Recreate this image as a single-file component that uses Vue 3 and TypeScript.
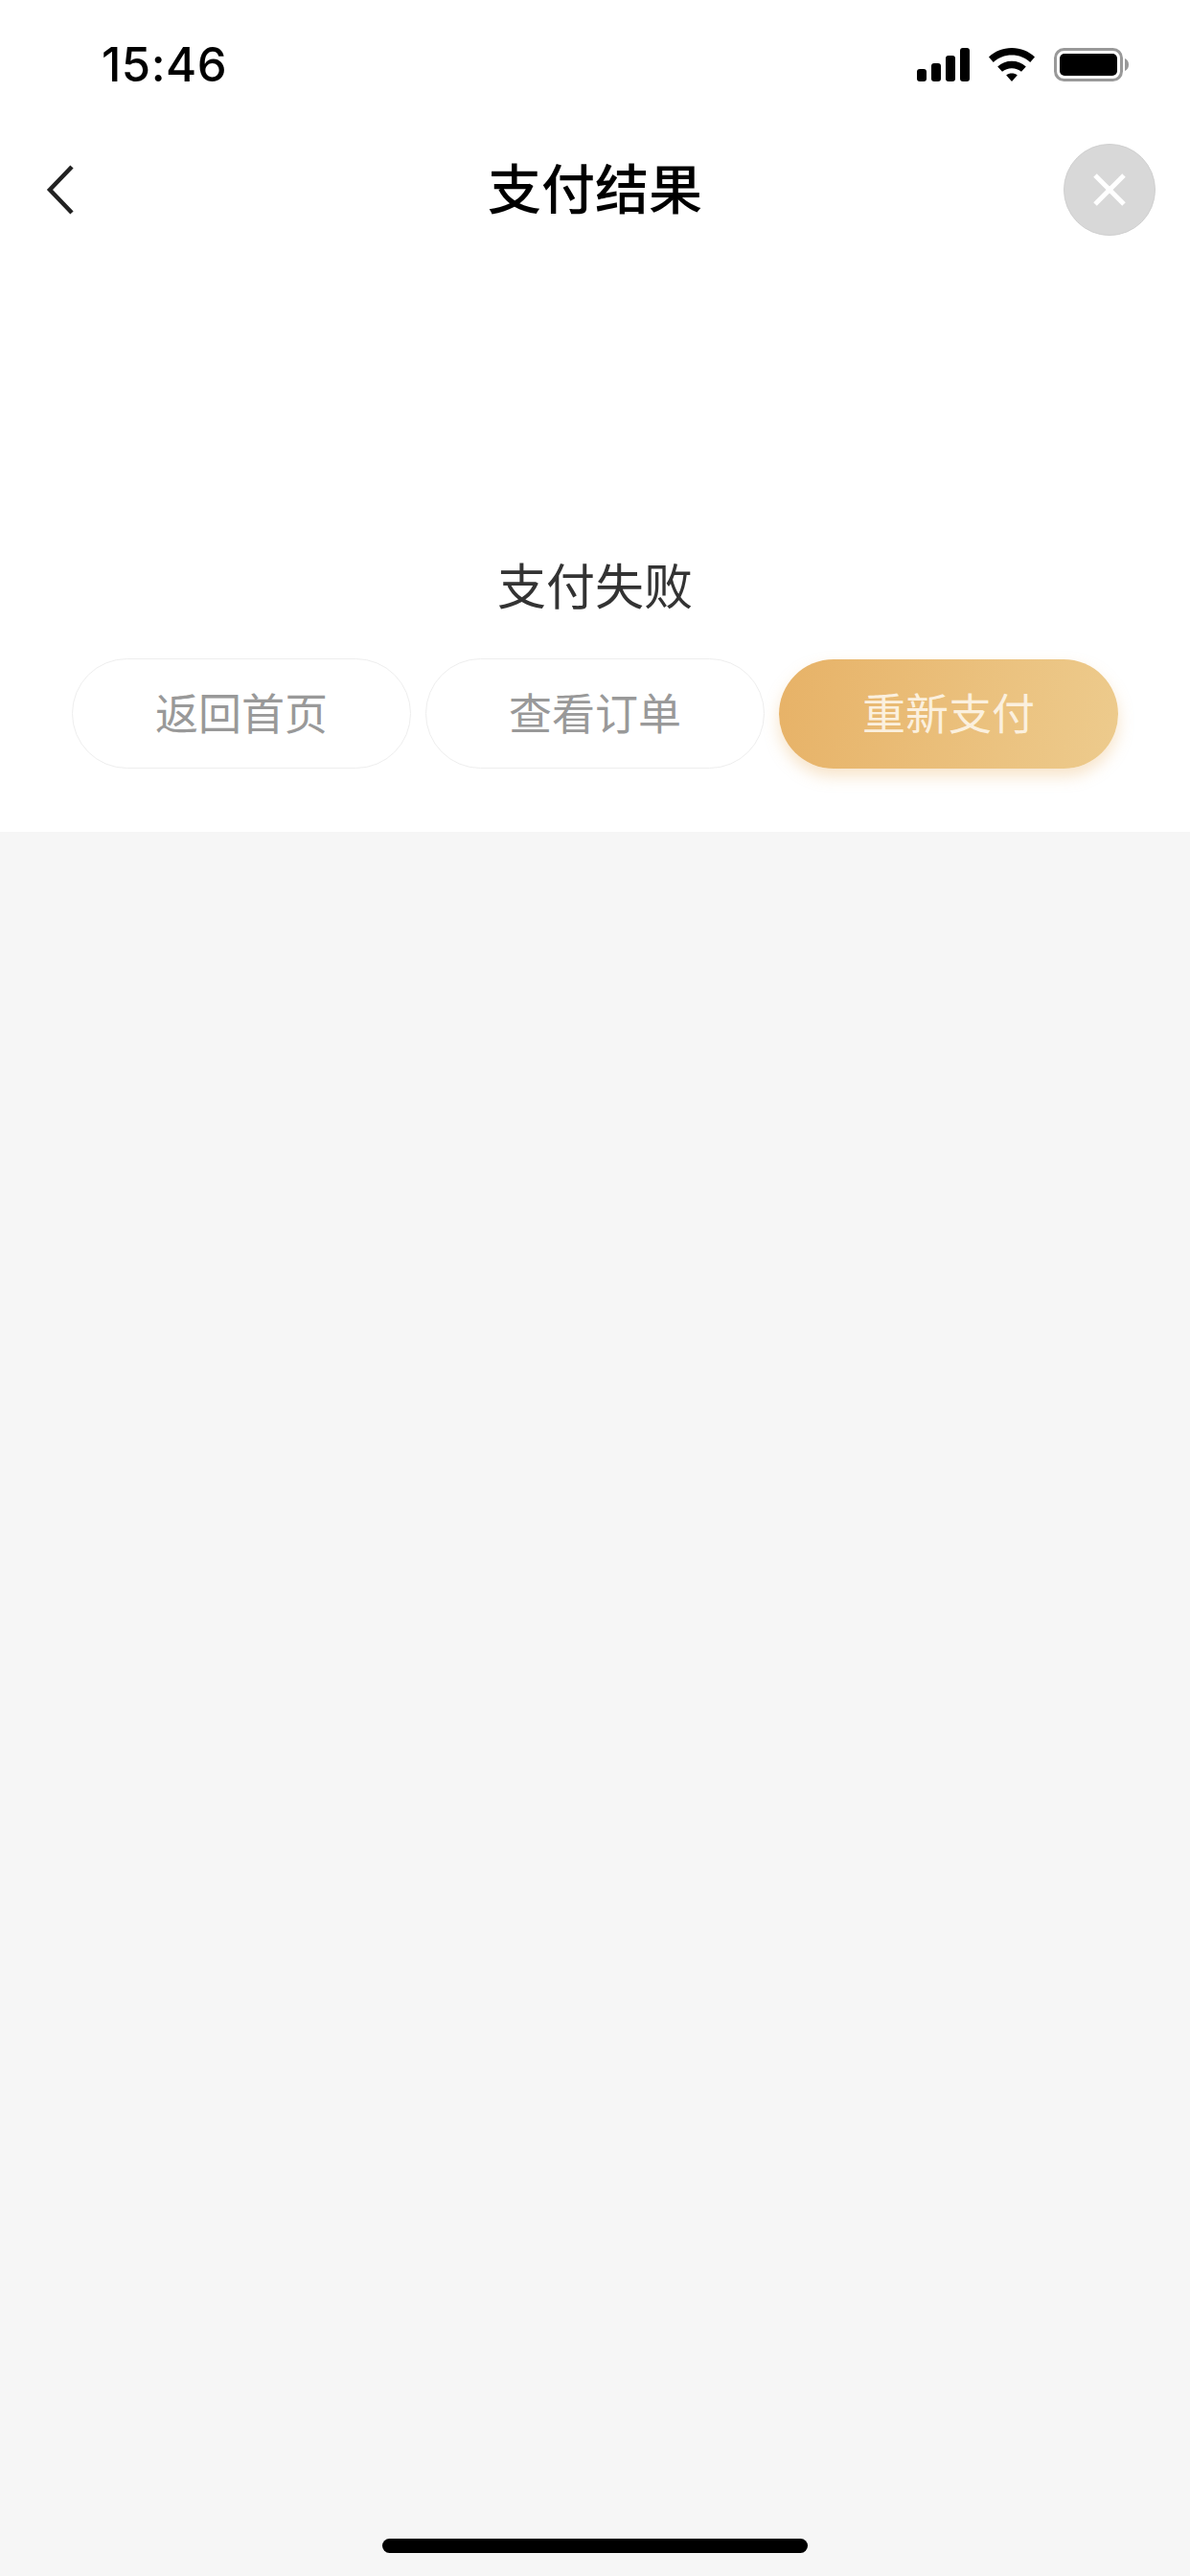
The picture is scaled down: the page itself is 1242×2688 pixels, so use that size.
<!-- 支付结果页 -->
<template>
  <div class="page">
    <section class="top">
      <header class="status-bar">
        <span class="time">15:46</span>
        <div class="status-icons">
          <svg width="55" height="35" viewBox="0 0 55 35">
            <rect x="0" y="22" width="10" height="13" rx="3" />
            <rect x="15" y="16" width="10" height="19" rx="3" />
            <rect x="30" y="8" width="10" height="27" rx="3" />
            <rect x="45" y="0" width="10" height="35" rx="3" />
          </svg>
          <svg width="48" height="35" viewBox="0 0 48 35">
            <path d="M24 0C33.5 0 41.5 3.4 48 9.5L43.2 15C38 10.2 31.4 7.6 24 7.6S10 10.2 4.8 15L0 9.5C6.5 3.4 14.5 0 24 0Z" />
            <path d="M24 13.8C29.6 13.8 34.6 15.8 38.8 19.4L34 24.8C31 22.4 27.8 21.2 24 21.2S17 22.4 14 24.8L9.2 19.4C13.4 15.8 18.4 13.8 24 13.8Z" />
            <path d="M24 26.6C26.2 26.6 28 27.2 29.8 28.6L24 35L18.2 28.6C20 27.2 21.8 26.6 24 26.6Z" />
          </svg>
          <svg width="78" height="35" viewBox="0 0 78 35">
            <rect x="1.5" y="1.5" width="69" height="32" rx="9" class="battery-frame" />
            <rect x="6" y="6" width="60" height="23" rx="5" />
            <path d="M74 11C76.5 12 78 14.5 78 17.5S76.5 23 74 24Z" class="battery-tip" />
          </svg>
        </div>
      </header>

      <nav class="nav-bar">
        <svg class="back" width="32" height="52" viewBox="0 0 32 52">
          <path d="M27 2L4 26L27 50" />
        </svg>
        <h1 class="nav-title">支付结果</h1>
        <div class="close">
          <svg width="36" height="36" viewBox="0 0 36 36">
            <path d="M3 3L33 33M33 3L3 33" />
          </svg>
        </div>
      </nav>

      <p class="result-text">{{ resultText }}</p>

      <div class="actions">
        <button
          v-for="item in actions"
          :key="item.label"
          class="action"
          :class="{ primary: item.primary }"
        >
          {{ item.label }}
        </button>
      </div>
    </section>

    <div class="home-indicator"></div>
  </div>
</template>

<script setup lang="ts">
interface ActionItem {
  label: string
  primary?: boolean
}

const resultText = '支付失败'

const actions: ActionItem[] = [
  { label: '返回首页' },
  { label: '查看订单' },
  { label: '重新支付', primary: true }
]
</script>

<style>
html,
body {
  margin: 0;
  background: #f6f6f6;
}
</style>

<style scoped>
.page {
  position: relative;
  height: 2688px;
  overflow: hidden;
  background: #f6f6f6;
  font-family: "Noto Sans CJK SC", "Liberation Sans", sans-serif;
}

.top {
  height: 868px;
  background: #fff;
}

.status-bar {
  height: 132px;
  padding: 3px 64px 0 106px;
  box-sizing: border-box;
  display: flex;
  align-items: center;
  justify-content: space-between;
}

.time {
  font-family: Inter, "Liberation Sans", sans-serif;
  font-size: 49px;
  font-weight: 550;
  letter-spacing: 0.5px;
  color: #000;
}

.status-icons {
  display: flex;
  align-items: center;
  gap: 20px;
}

.status-icons svg {
  display: block;
  fill: #000;
}

.battery-frame {
  fill: none;
  stroke: #999;
  stroke-width: 3;
}

.status-icons .battery-tip {
  fill: #999;
}

.nav-bar {
  height: 132px;
  padding: 0 36px 0 48px;
  display: flex;
  align-items: center;
  justify-content: space-between;
  position: relative;
}

.back {
  fill: none;
  stroke: #222;
  stroke-width: 4.5;
}

.nav-title {
  position: absolute;
  left: 0;
  right: 0;
  margin: -9px 0 0;
  text-align: center;
  font-size: 56px;
  font-weight: 500;
  color: #000;
}

.close {
  width: 96px;
  height: 96px;
  border-radius: 50%;
  background: #d8d8d8;
  border: 1px solid #d0d0d0;
  box-sizing: border-box;
  display: flex;
  align-items: center;
  justify-content: center;
}

.close svg {
  fill: none;
  stroke: #fff;
  stroke-width: 5;
}

.result-text {
  margin: 0;
  padding-top: 309px;
  text-align: center;
  font-size: 51px;
  line-height: 72px;
  color: #333;
}

.actions {
  display: grid;
  grid-template-columns: repeat(3, 1fr);
  gap: 15px;
  padding: 0 75px;
  margin-top: 42px;
}

.action {
  height: 115px;
  padding: 0 0 5px;
  border: 1px solid #eee;
  border-radius: 58px;
  background: #fff;
  font-family: inherit;
  font-size: 45px;
  color: #999;
}

.action.primary {
  height: 114px;
  margin-top: 1px;
  border: 0;
  background: linear-gradient(100deg, #e7b267, #edcb8d);
  box-shadow: 0 8px 16px rgba(231, 178, 103, 0.35);
  color: #fbf0de;
}

.home-indicator {
  position: absolute;
  left: 399px;
  bottom: 24px;
  width: 444px;
  height: 15px;
  border-radius: 8px;
  background: #000;
}
</style>
